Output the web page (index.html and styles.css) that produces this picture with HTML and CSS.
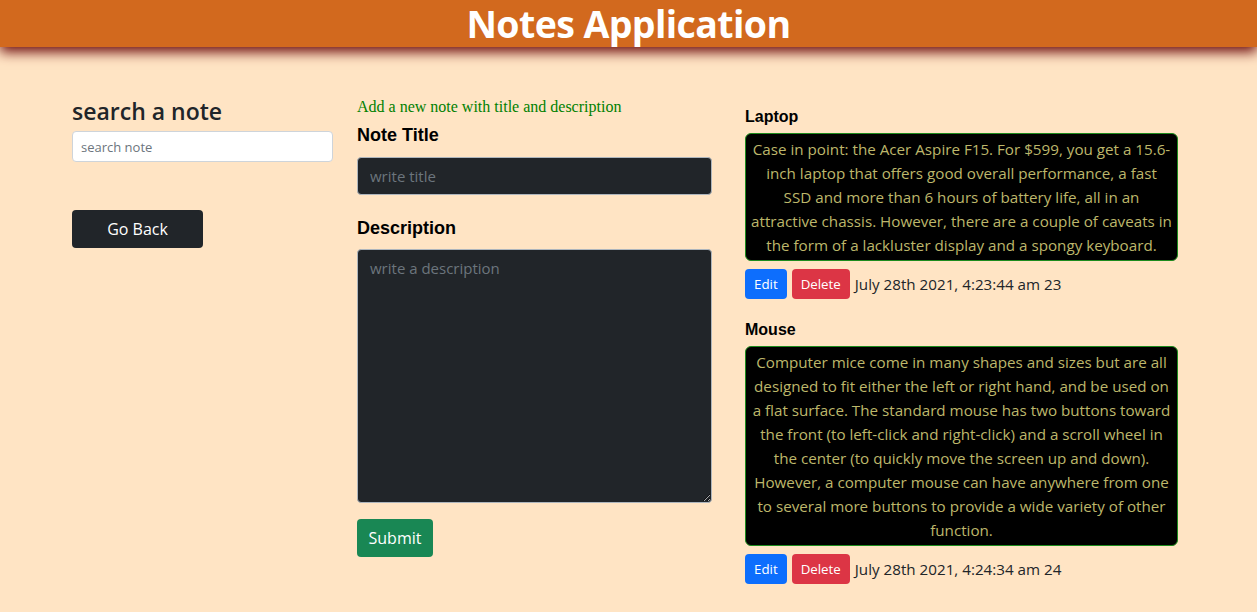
FILE: index.html
```html
<!DOCTYPE html>
<html lang="en">
<head>
<meta charset="utf-8">
<title>Notes Application</title>
<link rel="stylesheet" href="styles.css">
</head>
<body>
<header class="app-header">
  <h1 class="app-title">Notes Application</h1>
</header>
<main class="container">
  <section class="col-search">
    <h3 class="search-heading">search a note</h3>
    <input class="search-input" type="text" placeholder="search note">
    <button class="btn btn-dark btn-back">Go Back</button>
  </section>
  <section class="col-form">
    <p class="form-hint">Add a new note with title and description</p>
    <label class="form-label">Note Title</label>
    <input class="dark-input" type="text" placeholder="write title">
    <label class="form-label label-desc">Description</label>
    <textarea class="dark-input dark-textarea" placeholder="write a description"></textarea>
    <button class="btn btn-success btn-submit">Submit</button>
  </section>
  <section class="col-notes">
    <article class="note">
      <h4 class="note-title">Laptop</h4>
      <div class="note-body">Case in point: the Acer Aspire F15. For $599, you get a 15.6-<br>inch laptop that offers good overall performance, a fast<br>SSD and more than 6 hours of battery life, all in an<br>attractive chassis. However, there are a couple of caveats in<br>the form of a lackluster display and a spongy keyboard.</div>
      <div class="note-actions">
        <button class="btn btn-sm btn-primary">Edit</button>
        <button class="btn btn-sm btn-danger">Delete</button>
        <span class="note-date">July 28th 2021, 4:23:44 am 23</span>
      </div>
    </article>
    <article class="note">
      <h4 class="note-title">Mouse</h4>
      <div class="note-body">Computer mice come in many shapes and sizes but are all<br>designed to fit either the left or right hand, and be used on<br>a flat surface. The standard mouse has two buttons toward<br>the front (to left-click and right-click) and a scroll wheel in<br>the center (to quickly move the screen up and down).<br>However, a computer mouse can have anywhere from one<br>to several more buttons to provide a wide variety of other<br>function.</div>
      <div class="note-actions">
        <button class="btn btn-sm btn-primary">Edit</button>
        <button class="btn btn-sm btn-danger">Delete</button>
        <span class="note-date">July 28th 2021, 4:24:34 am 24</span>
      </div>
    </article>
  </section>
</main>
</body>
</html>
```
FILE: styles.css
```css
* { box-sizing: border-box; }
html, body { margin: 0; padding: 0; }
body {
  background: #ffe4c4;
  font-family: "Open Sans", "Noto Sans", sans-serif;
  font-size: 16px;
  color: #212529;
  overflow: hidden;
}
.app-header {
  background: #d2691e;
  height: 47px;
  display: flex;
  justify-content: center;
  align-items: center;
  box-shadow: 0 5px 12px 0 #6e0c0c;
  position: relative;
}
.app-title {
  margin: 0;
  color: #fff;
  font-size: 37.5px;
  font-weight: 700;
  letter-spacing: -0.6px;
  line-height: 46px;
}
.container {
  width: 1115px;
  margin: 0 auto;
  padding-left: 1px;
  display: flex;
  padding-top: 50px;
}
.col-search {
  width: 261px;
  margin-right: 24px;
  display: flex;
  flex-direction: column;
  align-items: flex-start;
}
.search-heading {
  margin: 0 0 6px;
  font-size: 23px;
  font-weight: 600;
  line-height: 28px;
}
.search-input {
  width: 100%;
  height: 31px;
  border: 1px solid #ced4da;
  border-radius: 4px;
  padding: 4px 8px;
  font-family: inherit;
  font-size: 13px;
  color: #212529;
  background: #fff;
}
.search-input::placeholder { color: #6c757d; }
.btn {
  border: 1px solid transparent;
  border-radius: 4px;
  font-family: inherit;
  color: #fff;
  cursor: pointer;
}
.btn-dark { background: #212529; }
.btn-back {
  margin-top: 48px;
  width: 131px;
  height: 38px;
  font-size: 16px;
}
.col-form {
  width: 355px;
  margin-right: 33px;
  display: flex;
  flex-direction: column;
  align-items: flex-start;
}
.form-hint {
  margin: 1px 0 0;
  font-family: "Liberation Serif", serif;
  font-size: 16px;
  color: #008000;
  line-height: 18px;
}
.form-label {
  font-family: "Liberation Sans", Arial, sans-serif;
  font-weight: 700;
  font-size: 18px;
  color: #000;
  margin-top: 8px;
  line-height: 22px;
  margin-bottom: 11px;
}
.label-desc { margin-top: 22px; margin-bottom: 10px; }
.dark-input {
  width: 100%;
  height: 38px;
  background: #212529;
  border: 1px solid #adb5bd;
  border-radius: 4px;
  padding: 6px 12px;
  font-family: inherit;
  font-size: 15px;
  color: #fff;
}
.dark-input::placeholder { color: #6c757d; }
.dark-textarea {
  height: 254px;
  padding-top: 8px;
  resize: vertical;
}
.btn-success { background: #198754; }
.btn-submit {
  margin-top: 16px;
  width: 76px;
  height: 38px;
  font-size: 16px;
}
.col-notes {
  width: 433px;
  padding-top: 10px;
}
.note { margin-bottom: 21px; }
.note-title {
  margin: 0 0 6px;
  font-family: "Liberation Sans", Arial, sans-serif;
  font-weight: 700;
  font-size: 16px;
  line-height: 20px;
  color: #000;
}
.note-body {
  background: #000;
  border: 1px solid #1d8b1d;
  border-radius: 6px;
  color: #bdb76b;
  text-align: center;
  font-size: 15.2px;
  line-height: 24px;
  padding: 3px 1px;
  white-space: nowrap;
}
.note-actions {
  display: flex;
  align-items: center;
  margin-top: 8px;
  gap: 5px;
}
.btn-sm {
  height: 30px;
  font-size: 13.3px;
  padding: 0 8px;
}
.btn-primary { background: #0d6efd; }
.btn-danger { background: #dc3545; }
.note-date {
  font-size: 15.2px;
  color: #212529;
}
```
